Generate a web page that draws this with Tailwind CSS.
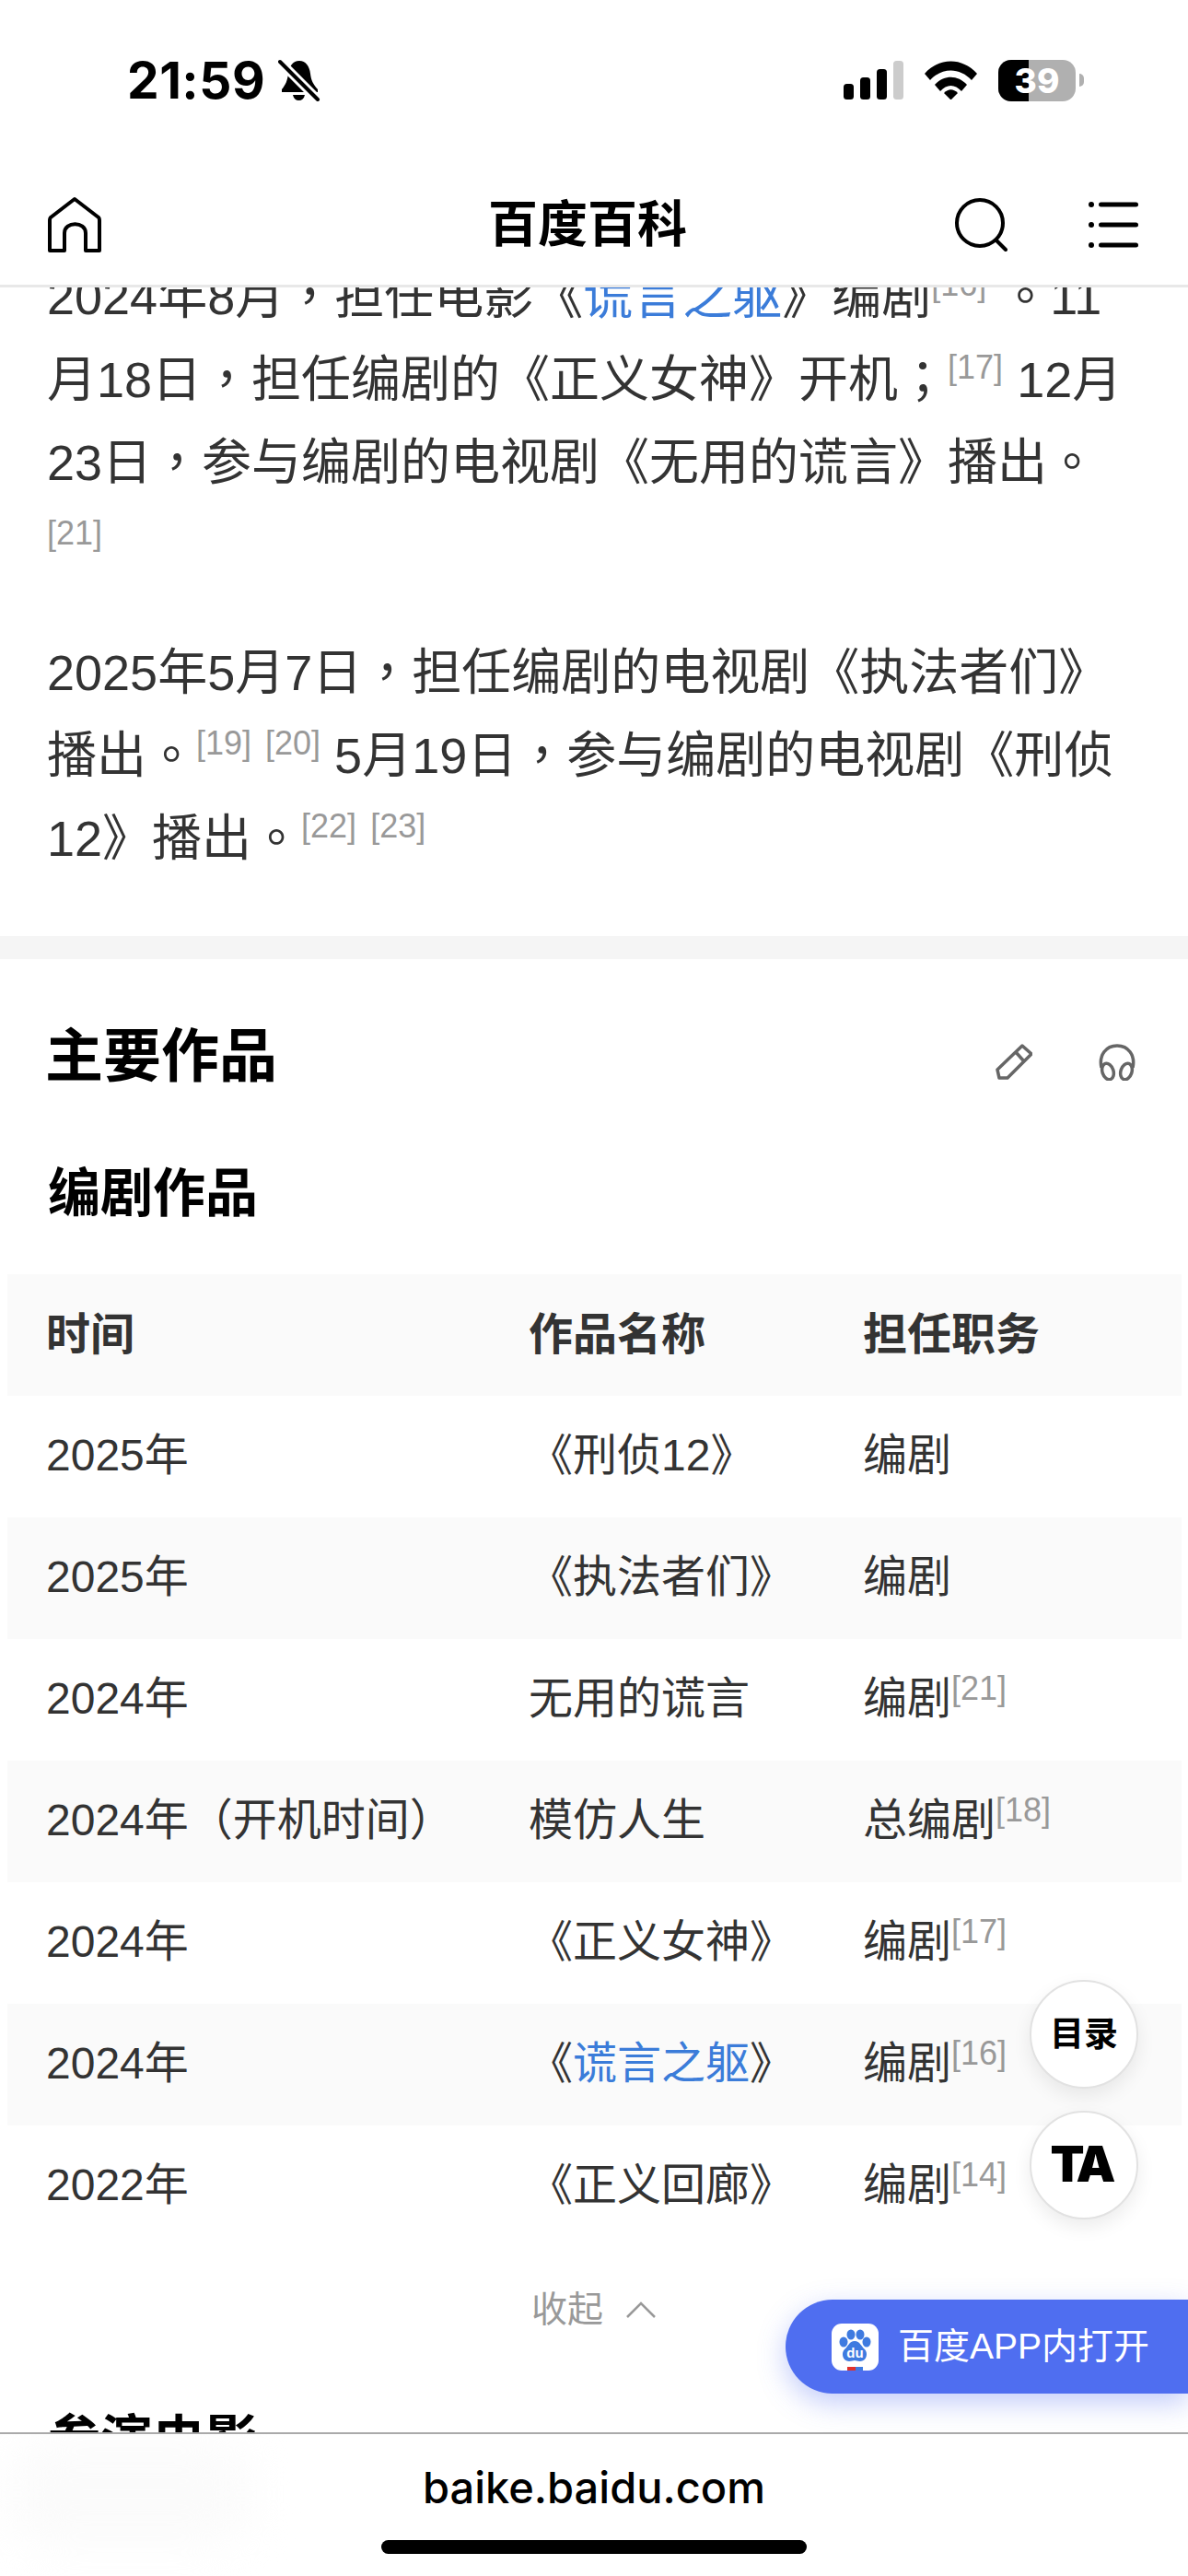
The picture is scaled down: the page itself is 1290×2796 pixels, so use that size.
<!DOCTYPE html>
<html lang="zh-CN">
  <head>
    <meta charset="UTF-8" />
    <meta name="viewport" content="width=device-width, initial-scale=1.0" />
    <title>百度百科</title>
    <script src="https://cdn.jsdelivr.net/npm/@tailwindcss/browser@4"></script>
  </head>
  <body class="bg-white font-['Liberation_Sans','Noto_Sans_CJK_SC',sans-serif]">
    <div class="relative w-[1290px] h-[2796px] overflow-hidden bg-white">
      <!-- article -->
      <main class="pt-[277px]">
        <section class="pl-[51px] text-[54px] leading-[90px] text-[#333] h-[739px]">
          <p class="whitespace-nowrap">2024年8月<span lang="zh-TW" class="leading-none font-['Noto_Sans_CJK_TC']">，</span>担任电影《<a class="text-[#3b7cd9]">谎言之躯</a>》编剧<span class="text-[36px] text-[#999] leading-none align-[20px]">[16]</span> <span lang="zh-TW" class="leading-none font-['Noto_Sans_CJK_TC']">。</span>11<br />月18日<span lang="zh-TW" class="leading-none font-['Noto_Sans_CJK_TC']">，</span>担任编剧的《正义女神》开机<span lang="zh-TW" class="leading-none font-['Noto_Sans_CJK_TC']">；</span><span class="text-[36px] text-[#999] leading-none align-[20px]">[17]</span> 12月<br />23日<span lang="zh-TW" class="leading-none font-['Noto_Sans_CJK_TC']">，</span>参与编剧的电视剧《无用的谎言》播出<span lang="zh-TW" class="leading-none font-['Noto_Sans_CJK_TC']">。</span><br /><span class="text-[36px] text-[#999] leading-none align-[20px]">[21]</span></p>
          <p class="mt-[48px] whitespace-nowrap">2025年5月7日<span lang="zh-TW" class="leading-none font-['Noto_Sans_CJK_TC']">，</span>担任编剧的电视剧《执法者们》<br />播出<span lang="zh-TW" class="leading-none font-['Noto_Sans_CJK_TC']">。</span><span class="text-[36px] text-[#999] leading-none align-[20px]">[19]</span><span class="ml-[15px] text-[36px] text-[#999] leading-none align-[20px]">[20]</span> 5月19日<span lang="zh-TW" class="leading-none font-['Noto_Sans_CJK_TC']">，</span>参与编剧的电视剧《刑侦<br />12》播出<span lang="zh-TW" class="leading-none font-['Noto_Sans_CJK_TC']">。</span><span class="text-[36px] text-[#999] leading-none align-[20px]">[22]</span><span class="ml-[15px] text-[36px] text-[#999] leading-none align-[20px]">[23]</span></p>
        </section>
        <div class="h-[25px] bg-[#f5f5f5]"></div>

        <div class="mt-[65px] flex items-center h-[80px] pl-[49px] pr-[57px]">
          <h2 class="text-[63px] font-bold text-black leading-none">主要作品</h2>
          <svg class="ml-auto mt-[14px]" width="40" height="40" viewBox="0 0 40 40" fill="none" stroke="#666" stroke-width="3.5" stroke-linejoin="round"><path d="M29 2l10 9-26 26H4l-2-9z" /><path d="M22 9l9 10" /></svg>
          <svg class="ml-[72px] mt-[14px]" width="40" height="40" viewBox="0 0 40 40" fill="none" stroke="#666" stroke-width="3.5"><path d="M3 26C0 12 8 2 20 2s20 10 17 24" /><ellipse cx="10" cy="30" rx="6" ry="9" transform="rotate(-18 10 30)" /><ellipse cx="30" cy="30" rx="6" ry="9" transform="rotate(18 30 30)" /></svg>
        </div>
        <h3 class="mt-[69px] h-[80px] flex items-center pl-[52px] text-[57px] font-bold text-black leading-none">编剧作品</h3>

        <table class="mt-[48px] ml-[8px] w-[1275px] table-fixed text-[48px] text-[#333] border-collapse [&_td]:pb-[3px]">
          <colgroup><col class="w-[522px]" /><col class="w-[363px]" /><col class="w-[390px]" /></colgroup>
          <thead>
            <tr class="h-[132px] bg-[#fafafa] font-bold text-left">
              <th class="pl-[42px]">时间</th>
              <th class="pl-[44px]">作品名称</th>
              <th class="pl-[44px]">担任职务</th>
            </tr>
          </thead>
          <tbody>
            <tr class="h-[132px]">
              <td class="pl-[42px]">2025年</td>
              <td class="pl-[44px]">《刑侦12》</td>
              <td class="pl-[44px]">编剧</td>
            </tr>
            <tr class="h-[132px] bg-[#fafafa]">
              <td class="pl-[42px]">2025年</td>
              <td class="pl-[44px]">《执法者们》</td>
              <td class="pl-[44px]">编剧</td>
            </tr>
            <tr class="h-[132px]">
              <td class="pl-[42px]">2024年</td>
              <td class="pl-[44px]">无用的谎言</td>
              <td class="pl-[44px]">编剧<span class="text-[36px] text-[#999] leading-none align-[15px]">[21]</span></td>
            </tr>
            <tr class="h-[132px] bg-[#fafafa]">
              <td class="pl-[42px]">2024年（开机时间）</td>
              <td class="pl-[44px]">模仿人生</td>
              <td class="pl-[44px]">总编剧<span class="text-[36px] text-[#999] leading-none align-[15px]">[18]</span></td>
            </tr>
            <tr class="h-[132px]">
              <td class="pl-[42px]">2024年</td>
              <td class="pl-[44px]">《正义女神》</td>
              <td class="pl-[44px]">编剧<span class="text-[36px] text-[#999] leading-none align-[15px]">[17]</span></td>
            </tr>
            <tr class="h-[132px] bg-[#fafafa]">
              <td class="pl-[42px]">2024年</td>
              <td class="pl-[44px]">《<a class="text-[#3b7cd9]">谎言之躯</a>》</td>
              <td class="pl-[44px]">编剧<span class="text-[36px] text-[#999] leading-none align-[15px]">[16]</span></td>
            </tr>
            <tr class="h-[132px]">
              <td class="pl-[42px]">2022年</td>
              <td class="pl-[44px]">《正义回廊》</td>
              <td class="pl-[44px]">编剧<span class="text-[36px] text-[#999] leading-none align-[15px]">[14]</span></td>
            </tr>
          </tbody>
        </table>

        <div class="mt-[38px] h-[60px] flex items-center pl-[577px] text-[39px] text-[#999]">
          <span>收起</span>
          <svg class="ml-[25px]" width="32" height="18" viewBox="0 0 32 18" fill="none" stroke="#999" stroke-width="2.5"><path d="M1 17L16 2l15 15" /></svg>
        </div>
        <h3 class="mt-[83px] pl-[52px] text-[57px] font-bold text-black leading-none">参演电影</h3>
      </main>

      <!-- status bar + nav -->
      <header class="absolute left-0 top-0 w-[1290px] h-[312px] bg-white border-b-[3px] border-[#e8e8e8]">
        <div class="flex items-center h-[60px] mt-[57px] pl-[138px] pr-[113px] font-['Inter',sans-serif]">
          <span class="text-[55px] font-bold text-black leading-none tracking-[0.5px]">21:59</span>
          <svg class="ml-[14px]" width="46" height="46" viewBox="0 0 46 46"><path d="M23 2c7 0 11 6 12 14 1 8 3 11 8 17v3H4v-3c4-5 6-9 7-17 1-8 5-14 12-14z" fill="#000" /><path d="M16 39h13c-1 4-3 6-6.500 6s-5.500-2-6.500-6z" fill="#000" /><path d="M2 3l41 41" stroke="#fff" stroke-width="10" /><path d="M2 3l41 41" stroke="#000" stroke-width="4" stroke-linecap="round" /></svg>
          <div class="ml-auto flex items-center">
            <svg width="65" height="42" viewBox="0 0 65 42"><rect x="0" y="25" width="11" height="17" rx="3.500" fill="#000" /><rect x="18" y="18" width="11" height="24" rx="3.500" fill="#000" /><rect x="36" y="9" width="11" height="33" rx="3.500" fill="#000" /><rect x="54" y="0" width="11" height="42" rx="3.500" fill="#ccc" /></svg>
            <svg class="ml-[23px]" width="57" height="42" viewBox="0 0 57 42"><path d="M0 14C16-4 41-4 57 14l-6 7C38 7 19 7 6 21z" fill="#000" /><path d="M11 26c10-11 25-11 35 0l-6 7c-7-8-16-8-23 0z" fill="#000" /><path d="M21 35c5-5 10-5 15 0l-7.500 7.500z" fill="#000" /></svg>
            <div class="ml-[23px] flex items-center">
              <div class="relative w-[84px] h-[45px] rounded-[14px] bg-[#b0b0b0] overflow-hidden flex items-center justify-center">
                <div class="absolute left-0 top-0 h-full w-[33px] bg-black"></div>
                <span class="relative text-[37px] font-extrabold text-white leading-none">39</span>
              </div>
              <div class="ml-[4px] w-[5px] h-[14px] rounded-r-full bg-[#b0b0b0]"></div>
            </div>
          </div>
        </div>
        <nav class="flex items-center h-[64px] mt-[95px] pl-[50px] pr-[54px]">
          <svg width="60" height="64" viewBox="0 0 60 64" fill="none" stroke="#000" stroke-width="4" stroke-linejoin="round"><path d="M31 4L57 24c1 1 1 2 1 3v33H43V41c0-13-23-13-23 0v19H4V27c0-1 0-2 1-3z" /></svg>
          <span class="ml-[420px] text-[54px] font-bold text-black leading-none">百度百科</span>
          <svg class="ml-auto" width="58" height="58" viewBox="0 0 58 58" fill="none" stroke="#000" stroke-width="4"><circle cx="28" cy="27" r="25" /><path d="M46 46l10 10" stroke-linecap="round" /></svg>
          <svg class="ml-[88px]" width="54" height="50" viewBox="0 0 54 50" fill="#000"><circle cx="3" cy="3" r="3" /><rect x="11" y="0.500" width="43" height="5" rx="2.500" /><circle cx="3" cy="25" r="3" /><rect x="11" y="22.500" width="43" height="5" rx="2.500" /><circle cx="3" cy="47" r="3" /><rect x="11" y="44.500" width="43" height="5" rx="2.500" /></svg>
        </nav>
      </header>

      <!-- floating buttons -->
      <div class="absolute left-[1118px] top-[2149px] w-[118px] h-[118px] rounded-full bg-white border-2 border-[#e2e2e2] shadow-[0_8px_20px_rgba(0,0,0,0.08)] flex items-center justify-center text-[37px] font-bold text-black pt-[2px]">目录</div>
      <div class="absolute left-[1118px] top-[2291px] w-[118px] h-[118px] rounded-full bg-white border-2 border-[#e2e2e2] shadow-[0_8px_20px_rgba(0,0,0,0.08)] flex items-center justify-center font-['Inter',sans-serif] text-[54px] font-black tracking-[-4px] text-black pr-[6px] pb-[4px]">TA</div>
      <div class="absolute left-[853px] top-[2496px] w-[437px] h-[102px] rounded-l-[51px] bg-[#4f6ef0] shadow-[0_10px_30px_rgba(79,110,240,0.35)] flex items-center pl-[50px]">
        <svg width="51" height="51" viewBox="0 0 51 51"><rect width="51" height="51" rx="11" fill="#fff" /><ellipse cx="13" cy="20" rx="4.500" ry="5.500" fill="#3f7be0" /><ellipse cx="21" cy="12" rx="4.500" ry="5.500" fill="#3f7be0" /><ellipse cx="31" cy="12" rx="4.500" ry="5.500" fill="#3f7be0" /><ellipse cx="38" cy="20" rx="4.500" ry="5.500" fill="#3f7be0" /><path d="M25 19c6 0 7 6 11 9 4 4 2 13-5 13-3 0-4-1-6-1s-3 1-6 1c-7 0-9-9-5-13 4-3 5-9 11-9z" fill="#3f7be0" /><text x="25.500" y="37" text-anchor="middle" font-size="15" font-weight="700" fill="#fff">du</text><rect x="17" y="47" width="9" height="4" fill="#e0322d" /><rect x="26" y="47" width="8" height="4" fill="#3f7be0" /></svg>
        <span class="ml-[21px] text-[39px] text-white whitespace-nowrap">百度APP内打开</span>
      </div>

      <!-- safari address bar -->
      <footer class="absolute left-0 top-[2640px] w-[1290px] h-[156px] bg-white border-t-2 border-[#aaa] overflow-hidden">
        <div class="absolute left-[10px] top-[10px] w-[260px] h-[110px] rounded-[40px] bg-[#fbfbfb] blur-xl"></div>
        <div class="relative mt-[28px] text-center font-['Inter',sans-serif] text-[47px] font-medium text-black leading-[60px]">baike.baidu.com</div>
        <div class="absolute left-[414px] top-[115px] w-[462px] h-[15px] rounded-full bg-black"></div>
      </footer>
    </div>
  </body>
</html>
